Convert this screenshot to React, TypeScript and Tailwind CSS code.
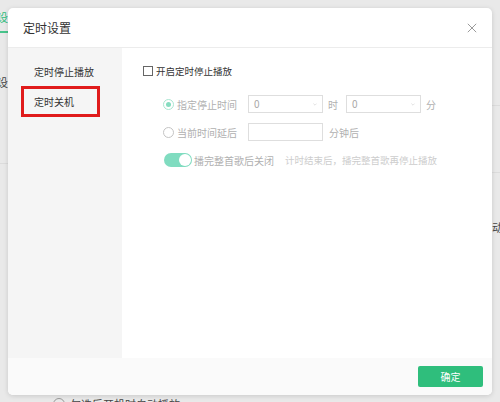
import React from 'react';

const font = { fontFamily: '"Noto Sans CJK SC", "Noto Sans", sans-serif' };

function Chevron() {
  return (
    <svg width="4" height="3" viewBox="0 0 4 3" className="shrink-0">
      <path d="M0.4 0.6 L2 2.2 L3.6 0.6" fill="none" stroke="#dadada" strokeWidth="0.8" />
    </svg>
  );
}

function Select({ value }: { value: string }) {
  return (
    <div className="w-[75px] h-[18px] border border-[#dedede] bg-white flex items-center justify-between pl-[5px] pr-[5px]">
      <span className="text-[10px] text-[#a8a8a8] leading-none">{value}</span>
      <Chevron />
    </div>
  );
}

function Radio({ checked }: { checked?: boolean }) {
  return checked ? (
    <span className="w-[11px] h-[11px] rounded-full border border-[#a9e6d1] flex items-center justify-center shrink-0">
      <span className="w-[5px] h-[5px] rounded-full bg-[#86dcc0]" />
    </span>
  ) : (
    <span className="w-[11px] h-[11px] rounded-full border border-[#c4c4c4] shrink-0" />
  );
}

export default function App() {
  return (
    <div className="relative w-[500px] h-[402px] overflow-hidden bg-[#e9e9e9]" style={font}>
      {/* page underneath the dialog */}
      <div className="absolute left-[-3px] top-[12px] text-[11px] text-[#2dbd7b] leading-none">设</div>
      <div className="absolute left-0 top-[31px] w-[8px] h-[2px] bg-[#48c48b]" />
      <div className="absolute left-[-3px] top-[77px] text-[11px] text-[#444] leading-none">设</div>
      <div className="absolute left-0 top-[163px] w-[8px] h-px bg-[#dcdcdc]" />
      <div className="absolute right-0 top-[105px] w-[8px] h-px bg-[#dcdcdc]" />
      <div className="absolute right-0 top-[172px] w-[8px] h-px bg-[#dcdcdc]" />
      <div className="absolute left-[492px] top-[222px] text-[11px] text-[#444] leading-none whitespace-nowrap">动播</div>
      <div className="absolute left-[53px] top-[398px] flex items-center gap-[5px] whitespace-nowrap">
        <span className="w-[12px] h-[12px] rounded-full border border-[#999]" />
        <span className="text-[11px] text-[#444] leading-none">勾选后开机时自动播放</span>
      </div>

      {/* dialog */}
      <div className="absolute left-[8px] top-[8px] w-[484px] h-[387px] bg-white rounded-[5px] shadow-[0_1px_5px_rgba(0,0,0,0.14)] flex flex-col overflow-hidden">
        <div className="h-[40px] shrink-0 border-b border-[#ececec] flex items-center justify-between pl-[15px] pr-[15px]">
          <span className="text-[12px] text-[#333]">定时设置</span>
          <svg width="10" height="10" viewBox="0 0 10 10">
            <path d="M0.8 0.8 L9.2 9.2 M9.2 0.8 L0.8 9.2" stroke="#9a9a9a" strokeWidth="1" />
          </svg>
        </div>

        <div className="flex-1 flex">
          <div className="w-[114px] shrink-0 bg-[#f5f5f5] pt-[15px] pl-[13px]">
            <div className="h-[16px] pl-[13px] flex items-center text-[10px] text-[#333] whitespace-nowrap">定时停止播放</div>
            <div className="mt-[7px] w-[79px] h-[31px] border-[3px] border-[#e01b1b] pl-[10px] flex items-center text-[10px] text-[#333]">定时关机</div>
          </div>

          <div className="flex-1 pt-[15px] pl-[21px]">
            <div className="h-[16px] flex items-center gap-[3px]">
              <span className="w-[10px] h-[10px] border border-[#666] bg-white shrink-0" />
              <span className="text-[9.5px] text-[#333] whitespace-nowrap">开启定时停止播放</span>
            </div>

            <div className="pl-[20px] mt-[16px] flex flex-col gap-[10px]">
              <div className="h-[18px] flex items-center">
                <div className="w-[85px] flex items-center gap-[3px]">
                  <Radio checked />
                  <span className="text-[10px] text-[#b0b0b0] whitespace-nowrap">指定停止时间</span>
                </div>
                <Select value="0" />
                <span className="ml-[5px] text-[10px] text-[#b0b0b0]">时</span>
                <div className="ml-[8px]">
                  <Select value="0" />
                </div>
                <span className="ml-[5px] text-[10px] text-[#b0b0b0]">分</span>
              </div>

              <div className="h-[18px] flex items-center">
                <div className="w-[85px] flex items-center gap-[3px]">
                  <Radio />
                  <span className="text-[10px] text-[#b0b0b0] whitespace-nowrap">当前时间延后</span>
                </div>
                <div className="w-[75px] h-[18px] border border-[#dedede] bg-white" />
                <span className="ml-[6px] text-[10px] text-[#b0b0b0] whitespace-nowrap">分钟后</span>
              </div>

              <div className="h-[18px] flex items-center">
                <div className="w-[28px] h-[14px] rounded-full bg-[#80dcc0] flex items-center justify-end pr-[1px] ml-[1px] shrink-0">
                  <span className="w-[12px] h-[12px] rounded-full bg-white" />
                </div>
                <span className="ml-[2px] text-[10px] text-[#b0b0b0] whitespace-nowrap">播完整首歌后关闭</span>
                <span className="ml-[11px] text-[9.5px] text-[#cdcdcd] whitespace-nowrap">计时结束后，播完整首歌再停止播放</span>
              </div>
            </div>
          </div>
        </div>

        <div className="h-[37px] shrink-0 bg-[#fafafa] flex items-center justify-end pr-[9px]">
          <button className="w-[65px] h-[21px] bg-[#2fbe7c] text-white text-[10px] rounded-[2px] flex items-center justify-center">确定</button>
        </div>
      </div>
    </div>
  );
}
